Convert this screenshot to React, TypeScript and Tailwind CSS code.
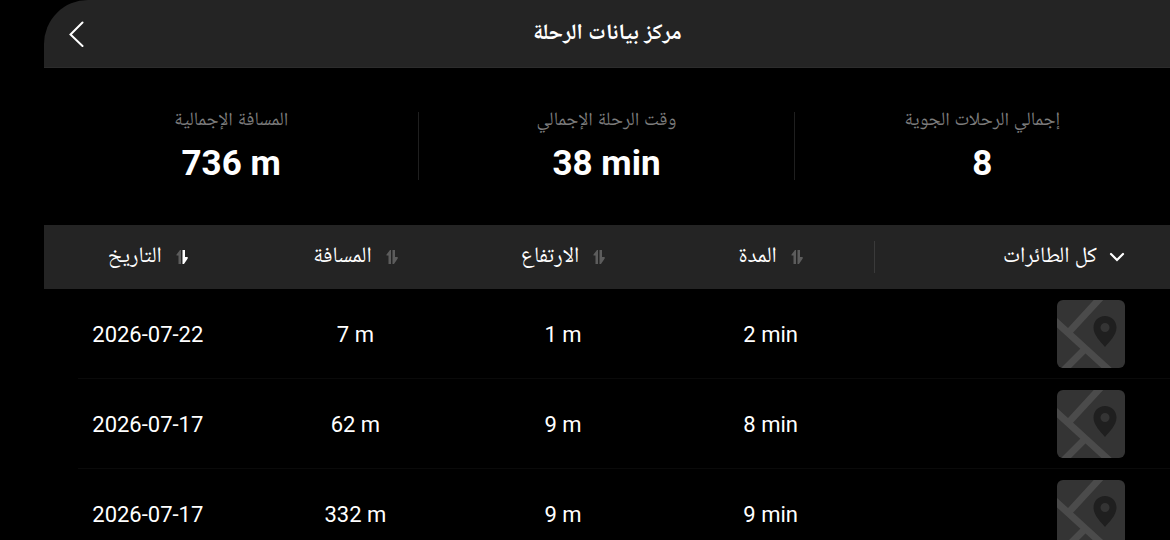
import React, { useState } from "react";

type SortKey = "date" | "distance" | "altitude" | "duration";

const TOTALS = [
  { label: "المسافة الإجمالية", value: "736 m" },
  { label: "وقت الرحلة الإجمالي", value: "38 min" },
  { label: "إجمالي الرحلات الجوية", value: "8" },
];

const COLUMNS: { key: SortKey; label: string }[] = [
  { key: "date", label: "التاريخ" },
  { key: "distance", label: "المسافة" },
  { key: "altitude", label: "الارتفاع" },
  { key: "duration", label: "المدة" },
];

const FLIGHTS = [
  { id: 1, date: "2026-07-22", distance: 7, altitude: 1, duration: 2 },
  { id: 2, date: "2026-07-17", distance: 62, altitude: 9, duration: 8 },
  { id: 3, date: "2026-07-17", distance: 332, altitude: 9, duration: 9 },
];

function SortIcon({ active, desc }: { active: boolean; desc: boolean }) {
  const up = active && !desc ? "#ffffff" : "#5c5c5c";
  const down = active && desc ? "#ffffff" : "#5c5c5c";
  return (
    <svg width="12" height="14" viewBox="0 0 12 14" aria-hidden="true">
      <path d="M5 0v14H2.500V5.500H0.500V4.500L4 0z" fill={up} />
      <path d="M6.500 14V0H9v7h2.700v1.500L8 14z" fill={down} />
    </svg>
  );
}

function MapThumb() {
  return (
    <svg width="68" height="68" viewBox="0 0 68 68" className="rounded-md bg-[#343434]" aria-hidden="true">
      <path d="M-4 19L54 72M12 32L47 -6M1 76L29 48" stroke="#4b4b4b" strokeWidth="7" fill="none" />
      <path
        fillRule="evenodd"
        d="M48 16C41.500 16 36.500 21 36.500 27.500C36.500 35.500 44 42 48 47C52 42 59.500 35.500 59.500 27.500C59.500 21 54.500 16 48 16ZM48 23a4.500 4.500 0 1 1 0 9a4.500 4.500 0 0 1 0-9Z"
        fill="#1f1f1f"
      />
    </svg>
  );
}

export default function App() {
  const [sortKey, setSortKey] = useState<SortKey>("date");
  const [desc, setDesc] = useState(true);

  const handleSort = (key: SortKey) => {
    if (key === sortKey) {
      setDesc(!desc);
      return;
    }
    setSortKey(key);
    setDesc(true);
  };

  const rows = [...FLIGHTS].sort((a, b) => {
    const order = a[sortKey] < b[sortKey] ? -1 : a[sortKey] > b[sortKey] ? 1 : 0;
    return desc ? -order : order;
  });

  return (
    <div
      lang="ar"
      className="h-screen overflow-hidden bg-black pl-11 text-white font-[Roboto,'Noto_Naskh_Arabic_UI','Noto_Naskh_Arabic','DejaVu_Sans',sans-serif]"
    >
      {/* Title bar */}
      <header className="grid h-17 grid-cols-[64px_1fr_64px] items-center rounded-tl-[44px] border-b border-[#2c2c2c] bg-[#242424]">
        <button type="button" aria-label="رجوع" className="flex h-full items-center justify-center">
          <svg width="16" height="26" viewBox="0 0 16 26" fill="none" aria-hidden="true">
            <path d="M14.500 1.500L2.500 13.500l12 11.500" stroke="#ffffff" strokeWidth="2" strokeLinecap="round" />
          </svg>
        </button>
        <h1 className="pt-0.5 text-center text-[22px] font-bold">مركز بيانات الرحلة</h1>
      </header>

      {/* Totals */}
      <dl className="grid grid-cols-3 pt-11 pb-[45px]">
        {TOTALS.map((t) => (
          <div key={t.label} className="border-r border-[#1f1f1f] text-center last:border-r-0">
            <dt className="text-[19px] leading-5 text-[#7d7d7d]">{t.label}</dt>
            <dd className="mt-4 text-[35px] leading-8 font-bold">{t.value}</dd>
          </div>
        ))}
      </dl>

      {/* Flight list */}
      <table className="w-full table-fixed border-collapse text-center text-[22px]">
        <thead className="bg-[#242424]">
          <tr className="h-16">
            {COLUMNS.map((col) => (
              <th key={col.key} scope="col" className="p-0 font-normal">
                <button type="button" onClick={() => handleSort(col.key)} className="inline-flex items-center gap-3.5">
                  {col.label}
                  <SortIcon active={sortKey === col.key} desc={desc} />
                </button>
              </th>
            ))}
            <th scope="col" className="w-[26.25%] p-0 font-normal">
              <label className="flex h-8 items-center justify-end gap-3 border-l border-[#3a3a3a] pr-[45px]">
                <select
                  aria-label="كل الطائرات"
                  dir="rtl"
                  className="field-sizing-content appearance-none bg-transparent outline-none"
                >
                  <option>كل الطائرات</option>
                </select>
                <svg width="16" height="10" viewBox="0 0 16 10" fill="none" aria-hidden="true">
                  <path d="M2 2l6 6 6-6" stroke="#ffffff" strokeWidth="2.200" strokeLinecap="round" />
                </svg>
              </label>
            </th>
          </tr>
        </thead>
        <tbody>
          {rows.map((f) => (
            <tr key={f.id}>
              <td className="p-0">
                <div className="ml-[34px] flex h-[90px] items-center justify-center border-b border-[#0a0a0a] pt-0.5 pr-[34px]">
                  {f.date}
                </div>
              </td>
              <td className="p-0">
                <div className="flex h-[90px] items-center justify-center border-b border-[#0a0a0a] pt-0.5">
                  {f.distance} m
                </div>
              </td>
              <td className="p-0">
                <div className="flex h-[90px] items-center justify-center border-b border-[#0a0a0a] pt-0.5">
                  {f.altitude} m
                </div>
              </td>
              <td className="p-0">
                <div className="flex h-[90px] items-center justify-center border-b border-[#0a0a0a] pt-0.5">
                  {f.duration} min
                </div>
              </td>
              <td className="p-0">
                <div className="flex h-[90px] items-center justify-end border-b border-[#0a0a0a] pr-[45px]">
                  <MapThumb />
                </div>
              </td>
            </tr>
          ))}
        </tbody>
      </table>
    </div>
  );
}
